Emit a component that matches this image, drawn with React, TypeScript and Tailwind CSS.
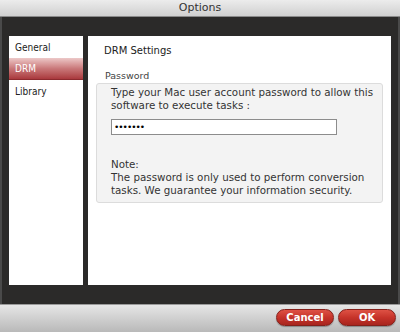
import React from 'react';

const font = { fontFamily: '"DejaVu Sans", "Liberation Sans", sans-serif' };
const narrow = { fontFamily: '"DejaVu Sans Condensed", "Liberation Sans", sans-serif' };

export default function App() {
  const items = ['General', 'DRM', 'Library'];
  return (
    <div className="w-[400px] h-[332px] flex flex-col overflow-hidden bg-[#2b2a29]" style={font}>
      {/* title bar */}
      <div className="h-[17px] flex items-center justify-center bg-gradient-to-b from-[#ececec] to-[#d0d0d0] border-b border-[#8a8a8a] text-[11px] text-[#333]">
        Options
      </div>

      {/* body */}
      <div className="flex-1 flex gap-[5px] pl-[7px] pr-[7px] pt-[19px] pb-[19px] border-x-2 border-[#4a4a4a]">
        <div className="w-[74px] bg-white flex flex-col text-[10px] text-[#222]" style={narrow}>
          {items.map((it) =>
            it === 'DRM' ? (
              <div
                key={it}
                className="h-[22px] flex items-center pl-[6px] text-white bg-gradient-to-b from-[#ecc8c8] via-[#c9787a] to-[#a9383d] border-b border-[#8c2a2e]"
              >
                {it}
              </div>
            ) : (
              <div key={it} className="h-[22px] flex items-center pl-[6px]">
                {it}
              </div>
            )
          )}
        </div>

        <div className="flex-1 bg-white flex flex-col pl-[8px] pr-[8px] text-[#333]">
          <div className="mt-[8px] pl-[8px] text-[10px] leading-[13px] text-[#222]">DRM Settings</div>
          <div className="mt-[13px] pl-[9px] text-[9.5px] leading-[12px] text-[#444]">Password</div>
          <div className="mt-[1px] bg-[#f3f3f3] border border-[#dcdcdc] rounded-[3px] pl-[14px] pr-[4px] pt-[2px] pb-[5px] text-[10.3px] leading-[13px] text-[#333] whitespace-nowrap">
            <div>
              Type your Mac user account password to allow this
              <br />
              software to execute tasks :
            </div>
            <div className="mt-[7px] w-[226px] h-[16px] bg-white border border-[#8c8c8c] flex items-center pl-[2px] text-[9px] tracking-[-1px] text-black">
              •••••••
            </div>
            <div className="mt-[23px]">Note:</div>
            <div>
              The password is only used to perform conversion
              <br />
              tasks. We guarantee your information security.
            </div>
          </div>
        </div>
      </div>

      {/* bottom bar */}
      <div className="h-[28px] flex justify-end items-start gap-[4px] pt-[4px] pr-[4px] bg-gradient-to-b from-[#e6e6e6] to-[#b9b9b9] border-t border-[#9a9a9a]">
        <button className="w-[58px] h-[17px] rounded-full bg-gradient-to-b from-[#de5144] via-[#c6332a] to-[#a8251e] border border-[#84201a] text-white text-[10px] font-bold leading-none shadow-[0_1px_1px_rgba(0,0,0,0.3)]">
          Cancel
        </button>
        <button className="w-[58px] h-[17px] rounded-full bg-gradient-to-b from-[#de5144] via-[#c6332a] to-[#a8251e] border border-[#84201a] text-white text-[10px] font-bold leading-none shadow-[0_1px_1px_rgba(0,0,0,0.3)]">
          OK
        </button>
      </div>
    </div>
  );
}
